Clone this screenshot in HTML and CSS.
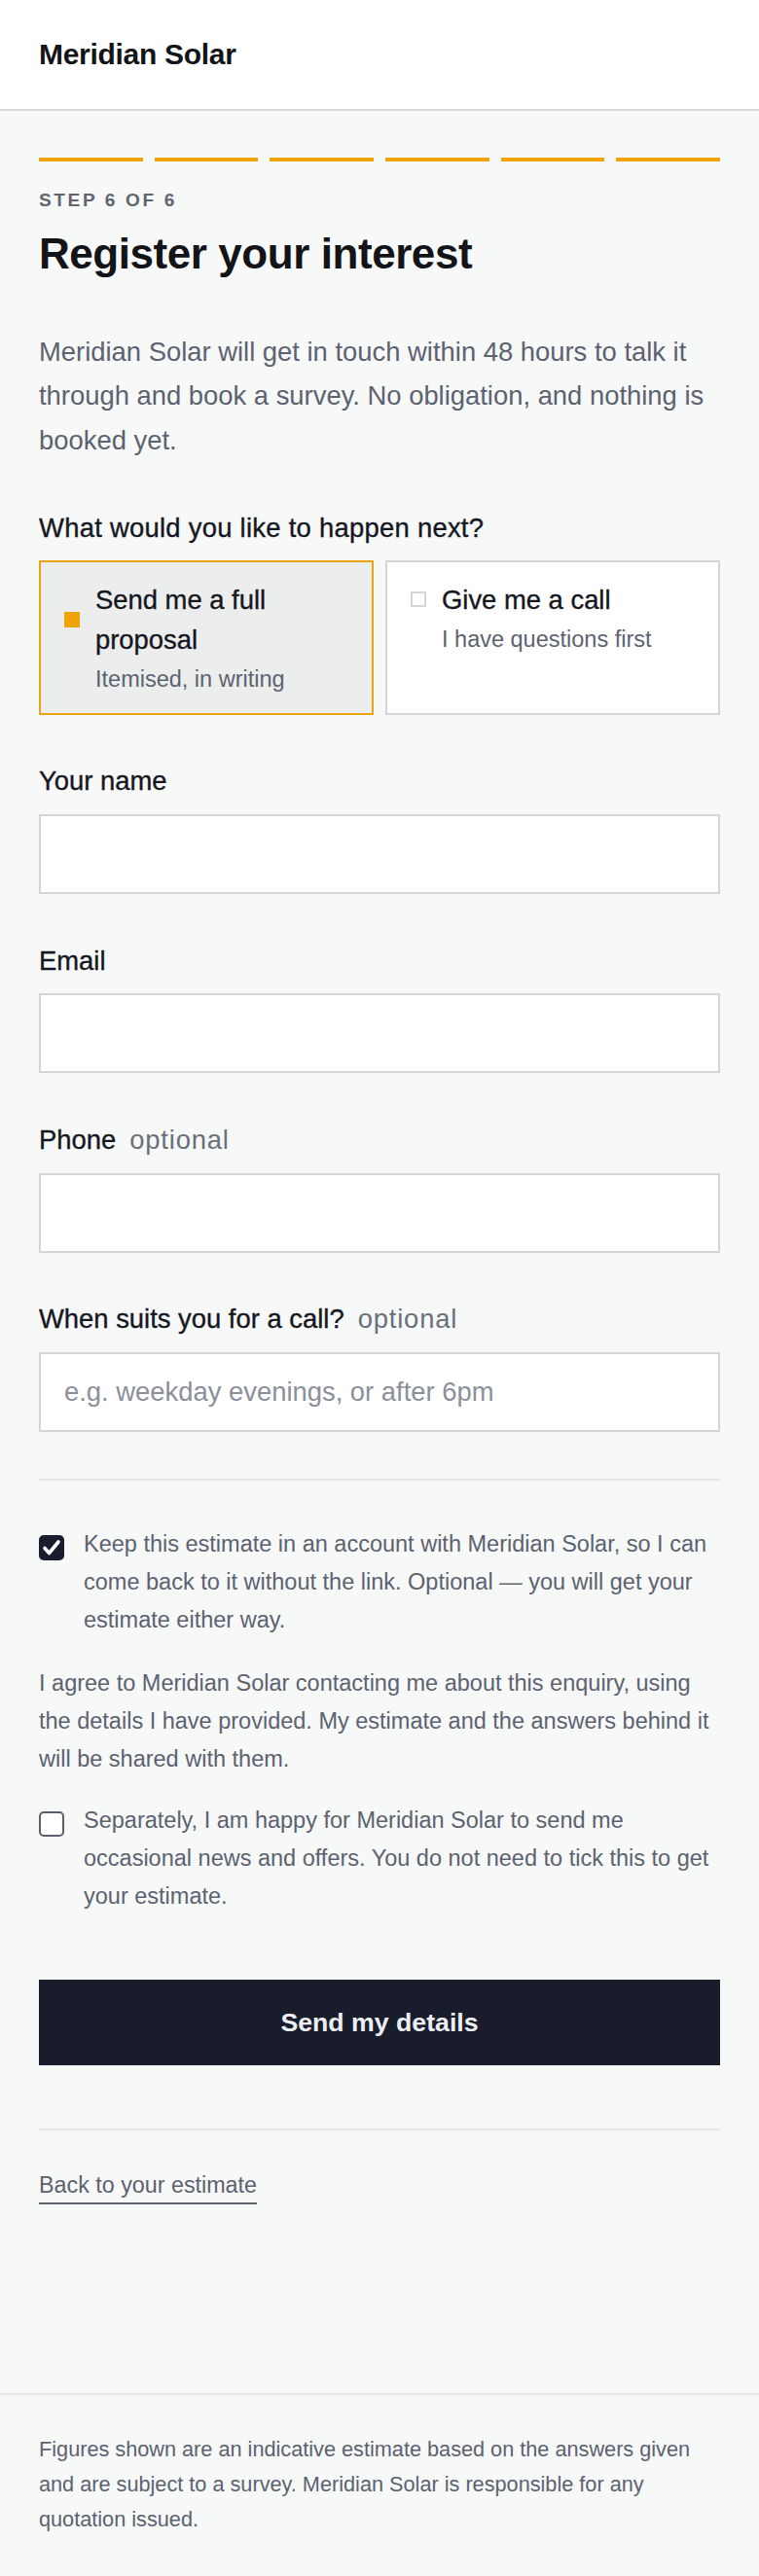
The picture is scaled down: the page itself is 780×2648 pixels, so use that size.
FILE: index.html
```html
<!DOCTYPE html>
<html lang="en">
<head>
<meta charset="utf-8">
<title>Register your interest – Meridian Solar</title>
<link rel="stylesheet" href="styles.css">
</head>
<body>
<header class="site-header">
  <div class="brand">Meridian Solar</div>
</header>
<main class="main">
  <div class="progress">
    <span class="seg"></span><span class="seg"></span><span class="seg"></span><span class="seg"></span><span class="seg"></span><span class="seg"></span>
  </div>
  <p class="step">Step 6 of 6</p>
  <h1 class="title">Register your interest</h1>
  <p class="lead">Meridian Solar will get in touch within 48 hours to talk it through and book a survey. No obligation, and nothing is booked yet.</p>

  <div class="question">What would you like to happen next?</div>
  <div class="options">
    <div class="option is-selected">
      <span class="ind"></span>
      <span class="opt-title">Send me a full proposal</span>
      <span class="opt-sub">Itemised, in writing</span>
    </div>
    <div class="option">
      <span class="ind"></span>
      <span class="opt-title">Give me a call</span>
      <span class="opt-sub">I have questions first</span>
    </div>
  </div>

  <div class="field">
    <label class="label" for="name">Your name</label>
    <input class="input" id="name" type="text">
  </div>
  <div class="field">
    <label class="label" for="email">Email</label>
    <input class="input" id="email" type="email">
  </div>
  <div class="field">
    <label class="label" for="phone">Phone<span class="opt">optional</span></label>
    <input class="input" id="phone" type="tel">
  </div>
  <div class="field">
    <label class="label" for="when">When suits you for a call?<span class="opt">optional</span></label>
    <input class="input" id="when" type="text" placeholder="e.g. weekday evenings, or after 6pm">
  </div>

  <hr class="rule rule-top">

  <div class="check">
    <span class="box box-on"><svg width="26" height="26" viewBox="0 0 26 26"><polyline points="6,13.5 10.5,18.5 20,7" fill="none" stroke="#ffffff" stroke-width="3.6" stroke-linecap="round" stroke-linejoin="round"/></svg></span>
    <span class="check-text">Keep this estimate in an account with Meridian Solar, so I can come back to it without the link. Optional — you will get your estimate either way.</span>
  </div>
  <p class="consent">I agree to Meridian Solar contacting me about this enquiry, using the details I have provided. My estimate and the answers behind it will be shared with them.</p>
  <div class="check check-second">
    <span class="box box-off"></span>
    <span class="check-text">Separately, I am happy for Meridian Solar to send me occasional news and offers. You do not need to tick this to get your estimate.</span>
  </div>

  <button class="submit" type="button">Send my details</button>

  <hr class="rule rule-bottom">

  <a class="back" href="#">Back to your estimate</a>
</main>
<footer class="site-footer">
  <p class="fine">Figures shown are an indicative estimate based on the answers given and are subject to a survey. Meridian Solar is responsible for any quotation issued.</p>
</footer>
</body>
</html>
```
FILE: styles.css
```css
* { box-sizing: border-box; }

html, body { margin: 0; padding: 0; }

body {
  font-family: "Liberation Sans", Arial, sans-serif;
  background: #f7f8f8;
  color: #15171f;
  min-height: 100vh;
  display: flex;
  flex-direction: column;
}

.site-header {
  background: #ffffff;
  height: 114px;
  border-bottom: 2px solid #d5d7da;
  display: flex;
  align-items: center;
  padding: 0 40px;
}

.brand {
  font-size: 30px;
  font-weight: 700;
  letter-spacing: -0.01em;
  color: #121418;
  line-height: 36px;
}

.main {
  flex: 1;
  padding: 48px 40px 0;
}

.progress {
  display: flex;
  gap: 12px;
}

.seg {
  flex: 1;
  height: 4px;
  background: #f0a30a;
}

.step {
  margin: 28px 0 0;
  font-size: 19px;
  line-height: 23px;
  font-weight: 700;
  letter-spacing: 0.14em;
  text-transform: uppercase;
  color: #61656f;
}

.title {
  margin: 19px 0 0;
  font-size: 44px;
  line-height: 50.6px;
  font-weight: 700;
  letter-spacing: -0.01em;
  color: #121418;
}

.lead {
  margin: 52px 0 0;
  font-size: 27.4px;
  line-height: 45.5px;
  color: #5c6270;
}

.question {
  margin-top: 50px;
  font-size: 27.4px;
  line-height: 35.6px;
  letter-spacing: 0.01em;
  -webkit-text-stroke: 0.35px currentColor;
  color: #15171f;
}

.options {
  margin-top: 15px;
  display: grid;
  grid-template-columns: 1fr 1fr;
  gap: 12px;
}

.option {
  display: grid;
  grid-template-columns: 16px 1fr;
  column-gap: 16px;
  align-content: start;
  padding: 18px 24px 17px;
  border: 2px solid #d3d5d8;
  background: #ffffff;
}

.option.is-selected {
  border-color: #e8a318;
  background: #eceeee;
}

.ind {
  grid-column: 1;
  grid-row: 1;
  align-self: center;
  width: 16px;
  height: 16px;
  border: 2px solid #d3d5d8;
  background: #ffffff;
}

.is-selected .ind {
  border: none;
  background: #f0a30a;
}

.opt-title {
  grid-column: 2;
  grid-row: 1;
  font-size: 27.4px;
  line-height: 41px;
  -webkit-text-stroke: 0.35px currentColor;
  color: #15171f;
}

.opt-sub {
  grid-column: 2;
  grid-row: 2;
  margin-top: 3px;
  font-size: 23.5px;
  line-height: 35px;
  color: #5c6270;
}

.field {
  margin-top: 50.5px;
}

.label {
  display: block;
  font-size: 27.4px;
  line-height: 35.6px;
  -webkit-text-stroke: 0.35px #15171f;
  color: #15171f;
  margin-bottom: 16.3px;
}

.opt {
  margin-left: 14px;
  letter-spacing: 0.03em;
  color: #6a6f7c;
  -webkit-text-stroke: 0;
}

.input {
  display: block;
  width: 100%;
  height: 82px;
  margin: 0;
  padding: 0 24px;
  border: 2px solid #d3d5d8;
  border-radius: 0;
  background: #ffffff;
  font-family: inherit;
  font-size: 27.4px;
  color: #15171f;
  outline: none;
}

.input::placeholder {
  color: #8b8f99;
}

.rule {
  border: 0;
  height: 2px;
  background: #e5e7e9;
}

.rule-top {
  margin: 48px 0 46px;
}

.rule-bottom {
  margin: 65px 0 0;
}

.check {
  display: flex;
  align-items: flex-start;
  gap: 20px;
  font-size: 23.5px;
  line-height: 39px;
  color: #5c6270;
}

.check-second {
  margin-top: 24px;
}

.box {
  flex: none;
  width: 26px;
  height: 26px;
  margin-top: 9.5px;
  border-radius: 5px;
}

.box svg {
  display: block;
}

.box-on {
  background: #1a1d2e;
}

.box-off {
  background: #ffffff;
  border: 2px solid #5b5f6b;
}

.consent {
  margin: 26px 0 0;
  font-size: 23.5px;
  line-height: 39px;
  color: #5c6270;
}

.submit {
  display: block;
  width: 100%;
  height: 88px;
  margin-top: 66px;
  border: none;
  border-radius: 0;
  background: #191c2b;
  color: #eceef4;
  font-family: inherit;
  font-size: 26.7px;
  font-weight: 700;
  cursor: pointer;
}

.back {
  display: block;
  width: max-content;
  margin-top: 38.5px;
  font-size: 23.3px;
  line-height: 35px;
  color: #5c6270;
  text-decoration: none;
  border-bottom: 2px solid #5c6270;
}

.site-footer {
  border-top: 2px solid #e5e7e9;
  padding: 38px 40px 40px;
}

.fine {
  margin: 0;
  font-size: 21.7px;
  line-height: 36px;
  color: #5c6270;
}
```
